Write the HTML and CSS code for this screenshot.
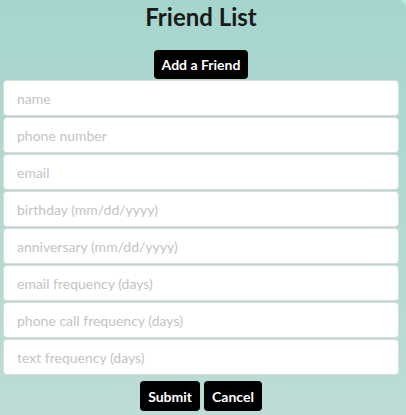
FILE: index.html
```
<!DOCTYPE html>
<html>
<head>
<meta charset="utf-8">
<link rel="stylesheet" href="styles.css">
</head>
<body>
<div class="page">
  <h1 class="title">Friend List</h1>
  <div class="center"><button class="btn add">Add a Friend</button></div>
  <form class="form">
    <input class="field" type="text" placeholder="name">
    <input class="field" type="text" placeholder="phone number">
    <input class="field" type="text" placeholder="email">
    <input class="field" type="text" placeholder="birthday (mm/dd/yyyy)">
    <input class="field" type="text" placeholder="anniversary (mm/dd/yyyy)">
    <input class="field" type="text" placeholder="email frequency (days)">
    <input class="field" type="text" placeholder="phone call frequency (days)">
    <input class="field" type="text" placeholder="text frequency (days)">
    <div class="actions">
      <button class="btn" type="button">Submit</button>
      <button class="btn" type="button">Cancel</button>
    </div>
  </form>
</div>
</body>
</html>
```
FILE: styles.css
```
html, body {
  margin: 0;
  padding: 0;
  height: 100%;
  background: #b6ecdd;
}
.page {
  box-sizing: border-box;
  min-height: 100%;
  background: linear-gradient(#a5d6ce, #bddcd6);
  border-top-right-radius: 8px;
  padding: 0 7px 0 3px;
  font-family: Lato, "Open Sans", sans-serif;
}
.title {
  margin: 0;
  padding-top: 2px;
  text-align: center;
  font-size: 24px;
  font-weight: 700;
  color: #1a1a1a;
  line-height: 30px;
}
.center {
  display: flex;
  justify-content: center;
  margin-top: 18px;
}
.btn {
  background: #000;
  color: #fff;
  border: none;
  border-radius: 4px;
  font-family: Lato, sans-serif;
  font-weight: 700;
  font-size: 14px;
  height: 30px;
  padding: 0 8px;
  cursor: pointer;
}
.add {
  height: 29px;
}
.form {
  display: flex;
  flex-direction: column;
  gap: 1px;
  margin: 1px 0 0;
}
.field {
  box-sizing: border-box;
  height: 36px;
  width: 100%;
  border: 1px solid #dcdcdc;
  border-radius: 4px;
  background: #fff;
  padding: 0 13px;
  font-family: Lato, sans-serif;
  font-size: 14px;
  outline: none;
}
.field::placeholder {
  color: #c4c4c4;
}
.actions {
  display: flex;
  justify-content: center;
  gap: 4px;
  margin-top: 5px;
}
```
